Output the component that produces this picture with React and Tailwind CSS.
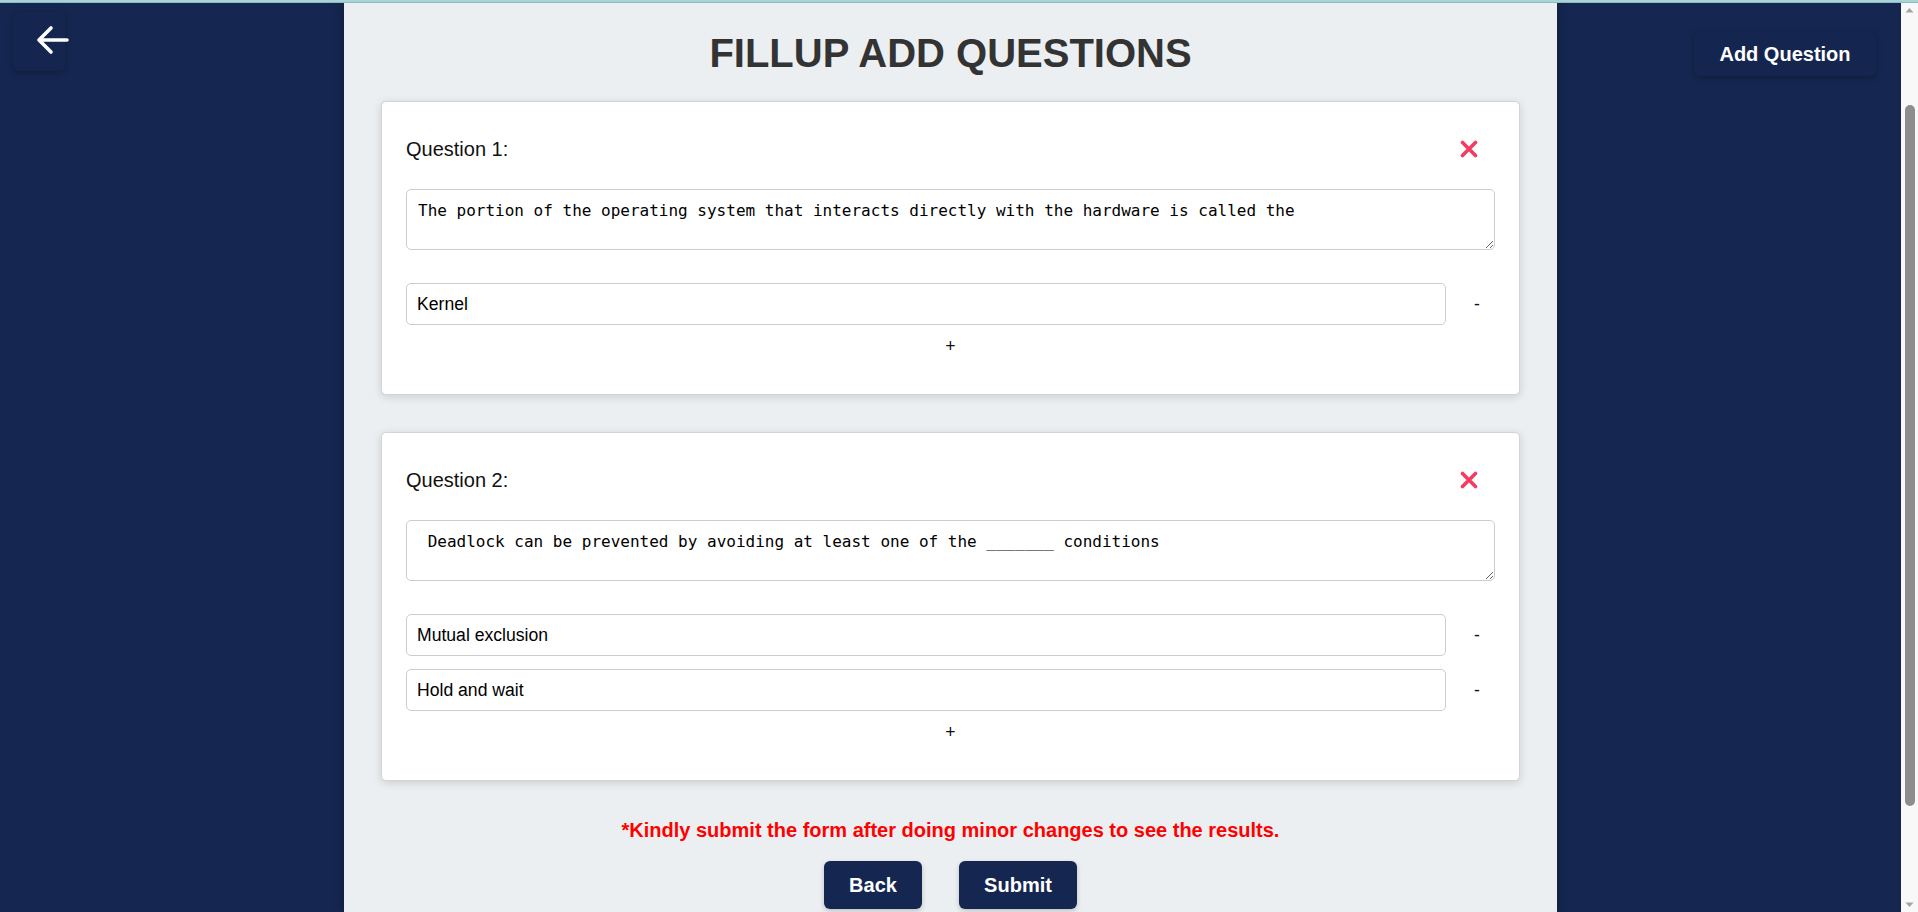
import React from "react";

const sans = { fontFamily: '"Liberation Sans", Arial, sans-serif' };
const mono = { fontFamily: '"DejaVu Sans Mono", Consolas, monospace' };

function CloseIcon() {
  return (
    <svg width="18" height="18" viewBox="0 0 18 18" fill="none">
      <path d="M2.5 2.5 L15.5 15.5 M15.5 2.5 L2.5 15.5" stroke="#f43b62" strokeWidth="3.6" strokeLinecap="round" />
    </svg>
  );
}

function QuestionCard({ n, text, options }) {
  return (
    <div className="bg-white border border-[#d3d3d3] rounded-[5px] shadow-[0_2px_8px_rgba(0,0,0,0.14)] px-[24px] pt-[35px] pb-[38px]">
      <div className="h-[24px] flex items-center justify-between">
        <span className="text-[20px] text-[#111] leading-[24px]">Question {n}:</span>
        <button className="mr-[17px] flex items-center justify-center">
          <CloseIcon />
        </button>
      </div>
      <textarea
        defaultValue={text}
        className="mt-[28px] block w-full h-[61px] border border-[#cccccc] rounded-[5px] px-[11px] pt-[11px] text-[16px] leading-[19px] text-black outline-none"
        style={mono}
      />
      <div className="mt-[33px] flex flex-col gap-[13px]">
        {options.map((o, i) => (
          <div key={i} className="flex items-center">
            <input
              defaultValue={o}
              className="flex-1 h-[42px] border border-[#cccccc] rounded-[5px] pl-[10px] text-[17.6px] text-black outline-none"
              style={sans}
            />
            <div className="w-[49px] h-[42px] flex items-center">
              <span className="pl-[28px] text-[17.6px] text-[#111]">-</span>
            </div>
          </div>
        ))}
      </div>
      <div className="mt-[11px] h-[20px] flex items-center justify-center text-[17.6px] text-[#111] leading-[20px]">+</div>
    </div>
  );
}

export default function App() {
  return (
    <div className="w-[1918px] h-[912px] overflow-hidden flex flex-col" style={sans}>
      <div className="h-[2px] bg-[#aad3d7]" />
      <div className="h-[1px] bg-[#8bbcc1]" />
      <div className="flex flex-1 min-h-0">
        <main className="relative flex-1 bg-[#152750] overflow-hidden">
          <button className="absolute left-[13px] top-[9px] w-[52px] h-[59px] rounded-[6px] bg-[#142650] shadow-[0_2px_6px_rgba(0,0,0,0.28)]">
            <svg className="absolute left-[23px] top-[13px]" width="34" height="30" viewBox="0 0 34 30" fill="none">
              <path d="M31 15 H3 M15 3 L3 15 L15 27" stroke="white" strokeWidth="3.6" strokeLinecap="round" strokeLinejoin="round" />
            </svg>
          </button>
          <button className="absolute right-[25px] top-[28px] w-[182px] h-[45px] rounded-[6px] bg-[#142650] shadow-[0_2px_6px_rgba(0,0,0,0.28)] text-white font-bold text-[20px]">
            Add Question
          </button>

          <div className="mx-auto w-[1213px] h-full bg-[#eceff1] shadow-[0_0_10px_rgba(0,0,0,0.35)] pt-[27px] px-[37px]">
            <h1 className="text-center text-[40px] leading-[46px] font-bold text-[#333333]">FILLUP ADD QUESTIONS</h1>
            <div className="mt-[25px] flex flex-col gap-[37px]">
              <QuestionCard
                n={1}
                text="The portion of the operating system that interacts directly with the hardware is called the"
                options={["Kernel"]}
              />
              <QuestionCard
                n={2}
                text=" Deadlock can be prevented by avoiding at least one of the _______ conditions"
                options={["Mutual exclusion", "Hold and wait"]}
              />
            </div>
            <p className="mt-[38px] text-center text-[20px] leading-[23px] font-bold text-[#ff0000]">
              *Kindly submit the form after doing minor changes to see the results.
            </p>
            <div className="mt-[19px] flex justify-center gap-[37px]">
              <button className="w-[98px] h-[48px] rounded-[6px] bg-[#152750] text-white font-bold text-[20px] shadow-[0_2px_5px_rgba(0,0,0,0.2)]">Back</button>
              <button className="w-[118px] h-[48px] rounded-[6px] bg-[#152750] text-white font-bold text-[20px] shadow-[0_2px_5px_rgba(0,0,0,0.2)]">Submit</button>
            </div>
          </div>
        </main>
        <div className="w-[17px] bg-[#f8f8f8] flex flex-col items-center">
          <svg className="mt-[4px]" width="9" height="6" viewBox="0 0 9 6">
            <path d="M0.5 5.5 L4.5 1 L8.5 5.5 Z" fill="#a3a3a3" />
          </svg>
          <div className="mt-[92px] w-[10px] h-[701px] rounded-full bg-[#8d8d8d]" />
          <div className="flex-1" />
          <svg className="mb-[4px]" width="9" height="6" viewBox="0 0 9 6">
            <path d="M0.5 0.5 L4.5 5 L8.5 0.5 Z" fill="#a3a3a3" />
          </svg>
        </div>
      </div>
    </div>
  );
}
